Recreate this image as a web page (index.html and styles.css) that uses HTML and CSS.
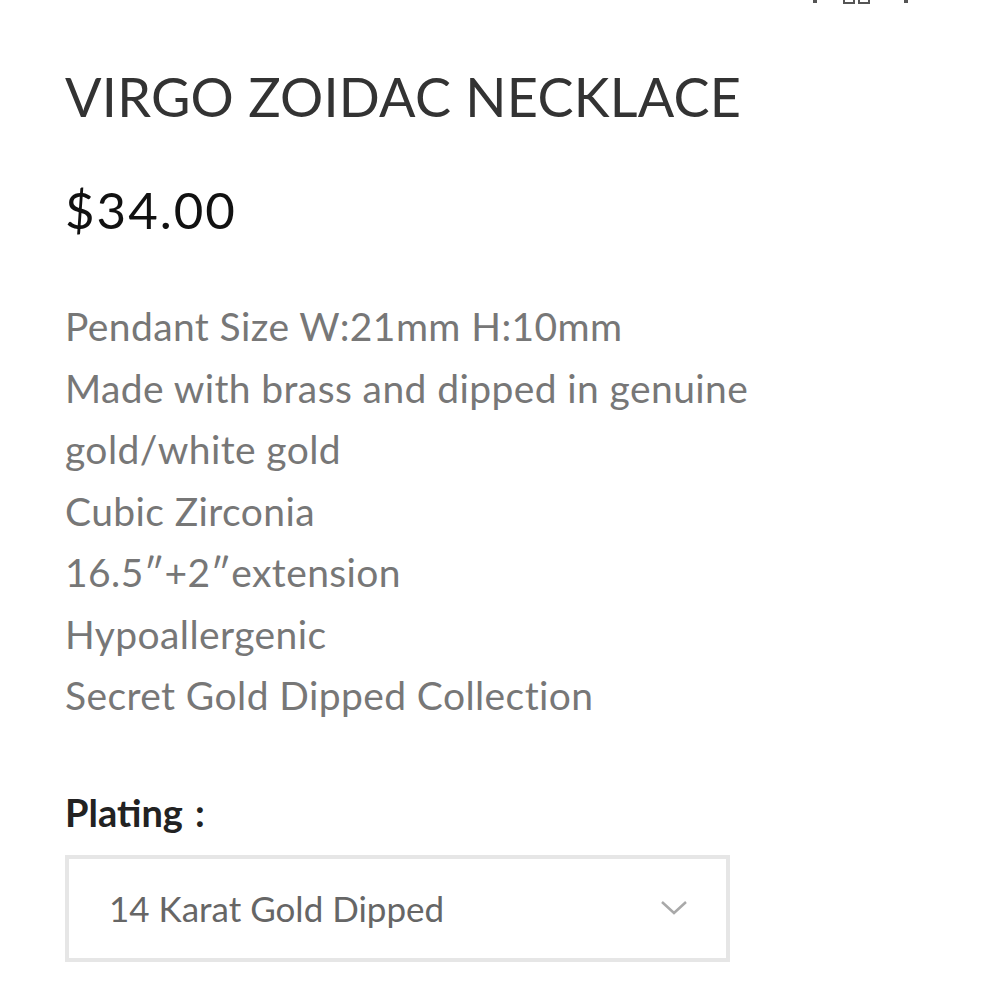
FILE: index.html
```html
<!DOCTYPE html>
<html>
<head>
<meta charset="utf-8">
<link rel="stylesheet" href="styles.css">
</head>
<body>
<div class="top-strip">
  <span class="mark mark-a"></span>
  <span class="mark mark-b"><i></i><i></i></span>
  <span class="mark mark-c"></span>
</div>
<main class="product">
  <h1 class="title">VIRGO ZOIDAC NECKLACE</h1>
  <div class="price">$34.00</div>
  <div class="desc">
    <p>Pendant Size W:21mm H:10mm</p>
    <p>Made with brass and dipped in genuine gold/white gold</p>
    <p>Cubic Zirconia</p>
    <p>16.5″+2″extension</p>
    <p>Hypoallergenic</p>
    <p>Secret Gold Dipped Collection</p>
  </div>
  <div class="option-label">Plating<span class="colon">:</span></div>
  <div class="select">
    <span class="select-text">14 Karat Gold Dipped</span>
    <svg class="chevron" width="28" height="16" viewBox="0 0 28 16"><path d="M2 2 L14 13 L26 2" fill="none" stroke="#a9a9a9" stroke-width="2.5"/></svg>
  </div>
</main>
</body>
</html>
```
FILE: styles.css
```css
html, body { margin: 0; padding: 0; background: #fff; }
body { font-family: "Lato", "Open Sans", sans-serif; width: 1000px; height: 1000px; overflow: hidden; }
.top-strip { position: relative; height: 0; }
.mark { position: absolute; top: 0; display: block; }
.mark-a { left: 813px; width: 4px; height: 3px; background: #555; }
.mark-b { left: 843px; top: 0; display: flex; gap: 3px; }
.mark-b i { display: block; width: 12px; height: 4px; border: 2px solid #555; border-top: none; box-sizing: border-box; }
.mark-c { left: 904px; width: 4px; height: 3px; background: #555; }
.product { padding: 66px 0 0 65px; }
.title { margin: 0; font-weight: 400; font-size: 54px; line-height: 62px; color: #333; letter-spacing: 0.25px; }
.price { margin-top: 52px; font-size: 51px; line-height: 60px; color: #111; letter-spacing: 2px; }
.desc { margin-top: 56px; width: 720px; color: #777; font-size: 39px; line-height: 61.5px; letter-spacing: 0.4px; }
.desc p { margin: 0; }
.option-label { margin-top: 60px; font-weight: 700; font-size: 38px; line-height: 50px; color: #222; }
.colon { margin-left: 12px; }
.select { margin-top: 18px; width: 665px; height: 107px; box-sizing: border-box; border: 4px solid #e6e6e6; display: flex; align-items: center; justify-content: space-between; padding: 0 38px 0 40px; }
.select-text { font-size: 35px; color: #666; }
.chevron { display: block; }
```
